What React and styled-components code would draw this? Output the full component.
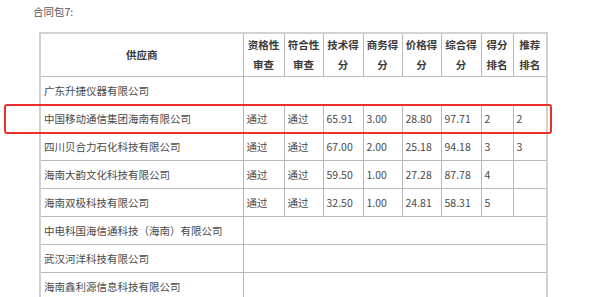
import styled, { createGlobalStyle } from "styled-components";

const GlobalStyle = createGlobalStyle`
  html, body {
    margin: 0;
    padding: 0;
    background: #ffffff;
  }
  body {
    font-family: "Noto Sans CJK SC", "Noto Sans", sans-serif;
    color: #444;
  }
`;

const Page = styled.div`
  position: relative;
  width: 600px;
  height: 297px;
  overflow: hidden;
`;

const Caption = styled.p`
  margin: 0;
  padding: 4px 0 0 33px;
  height: 32px;
  box-sizing: border-box;
  font-size: 10.5px;
  line-height: 16px;
  color: #555;
`;

const Table = styled.table`
  margin-left: 39px;
  width: 507px;
  table-layout: fixed;
  border-collapse: collapse;
  border: 2px solid #d2d2d2;
  font-size: 10.5px;
  color: #4a4a4a;
`;

const Th = styled.th`
  height: 42px;
  padding: 0 2px;
  border: 1px solid #b9b9b9;
  font-weight: 600;
  color: #3a3a3a;
  line-height: 20px;
  text-align: center;
  vertical-align: middle;
`;

const Td = styled.td`
  height: 27px;
  padding: 0 0 0 3px;
  border: 1px solid #b9b9b9;
  line-height: 16px;
  text-align: left;
  vertical-align: middle;
  white-space: nowrap;
  overflow: hidden;
`;

const Highlight = styled.div`
  position: absolute;
  left: 4px;
  top: 104px;
  width: 548px;
  height: 30px;
  box-sizing: border-box;
  border: 2px solid #e8312b;
  border-radius: 3px;
  pointer-events: none;
`;

const widths = [203, 41, 39, 40, 39, 39, 40, 32, 34];

const headers = [
  ["供应商"],
  ["资格性", "审查"],
  ["符合性", "审查"],
  ["技术得", "分"],
  ["商务得", "分"],
  ["价格得", "分"],
  ["综合得", "分"],
  ["得分", "排名"],
  ["推荐", "排名"],
];

const rows = [
  { name: "广东升捷仪器有限公司" },
  { name: "中国移动通信集团海南有限公司", cells: ["通过", "通过", "65.91", "3.00", "28.80", "97.71", "2", "2"] },
  { name: "四川贝合力石化科技有限公司", cells: ["通过", "通过", "67.00", "2.00", "25.18", "94.18", "3", "3"] },
  { name: "海南大韵文化科技有限公司", cells: ["通过", "通过", "59.50", "1.00", "27.28", "87.78", "4", ""] },
  { name: "海南双极科技有限公司", cells: ["通过", "通过", "32.50", "1.00", "24.81", "58.31", "5", ""] },
  { name: "中电科国海信通科技（海南）有限公司" },
  { name: "武汉河洋科技有限公司" },
  { name: "海南鑫利源信息科技有限公司" },
];

export default function App() {
  return (
    <Page>
      <GlobalStyle />
      <Caption>合同包7:</Caption>
      <Table>
        <colgroup>
          {widths.map((w, i) => (
            <col key={i} style={{ width: w }} />
          ))}
        </colgroup>
        <thead>
          <tr>
            {headers.map((h, i) => (
              <Th key={i}>
                {h.map((line, j) => (
                  <div key={j}>{line}</div>
                ))}
              </Th>
            ))}
          </tr>
        </thead>
        <tbody>
          {rows.map((r, i) => (
            <tr key={i}>
              <Td>{r.name}</Td>
              {r.cells ? (
                r.cells.map((c, j) => <Td key={j}>{c}</Td>)
              ) : (
                <Td colSpan={8} />
              )}
            </tr>
          ))}
        </tbody>
      </Table>
      <Highlight />
    </Page>
  );
}
